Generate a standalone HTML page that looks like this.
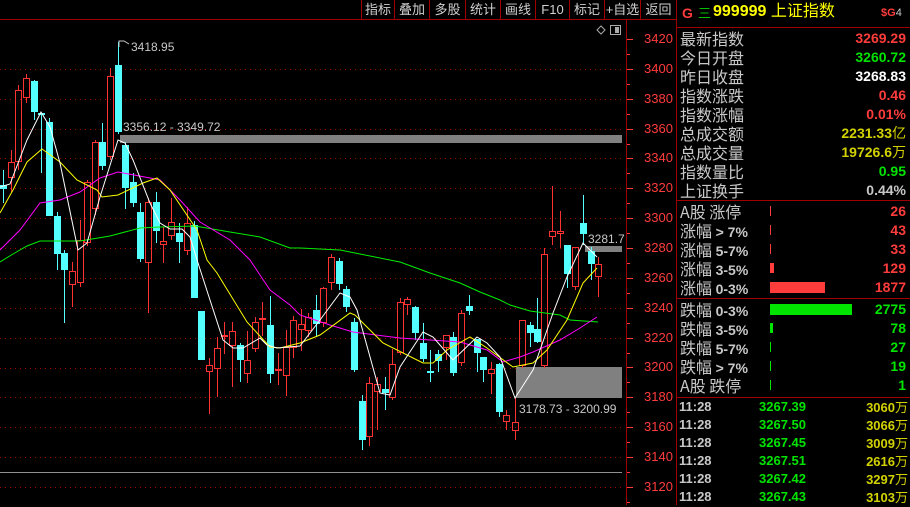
<!DOCTYPE html>
<html><head><meta charset="utf-8">
<style>
*{margin:0;padding:0;box-sizing:border-box}
body{width:910px;height:505px;background:#000;position:relative;overflow:hidden;font-family:"Liberation Sans","Noto Sans CJK SC",sans-serif}
.t{position:absolute;white-space:nowrap;line-height:1}
.tb{position:absolute;top:0;height:19px;color:#d0d0d0;font-size:13px;text-align:center;line-height:19px;border-left:1px solid #a00000}
.lab{position:absolute;left:680px;color:#c8c8c8;font-size:16px;line-height:19px;font-family:"Noto Sans CJK SC",sans-serif}
.val{position:absolute;right:4px;font-size:14px;font-weight:bold;line-height:19px;font-family:"Liberation Sans",sans-serif}
.r{color:#ff3c3c}.g{color:#00e400}.w{color:#fff}.y{color:#d2d200}.gr{color:#c8c8c8}
.ax{position:absolute;left:644px;color:#ff3c3c;font-size:13px;line-height:14px}
</style></head><body>
<div style="position:absolute;left:0;top:19px;width:677px;height:1px;background:#a00000"></div>
<div class="tb" style="left:361px;width:33px">指标</div>
<div class="tb" style="left:394px;width:35px">叠加</div>
<div class="tb" style="left:429px;width:36px">多股</div>
<div class="tb" style="left:465px;width:35px">统计</div>
<div class="tb" style="left:500px;width:35px">画线</div>
<div class="tb" style="left:535px;width:34px">F10</div>
<div class="tb" style="left:569px;width:35px">标记</div>
<div class="tb" style="left:604px;width:36px">+自选</div>
<div class="tb" style="left:640px;width:36px">返回</div>
<div style="position:absolute;left:626px;top:19px;width:1px;height:486px;background:#a00000"></div>
<div style="position:absolute;left:676px;top:0;width:1px;height:505px;background:#a00000"></div>
<div style="position:absolute;left:677px;top:27px;width:233px;height:1px;background:#a00000"></div>
<div style="position:absolute;left:677px;top:200px;width:233px;height:1px;background:#a00000"></div>
<div style="position:absolute;left:677px;top:298px;width:233px;height:1px;background:#a00000"></div>
<div style="position:absolute;left:677px;top:397px;width:233px;height:1px;background:#a00000"></div>

<svg width="910" height="505" style="position:absolute;left:0;top:0" id="sv">
<g stroke="#a00000" stroke-width="1" stroke-dasharray="1,4" id="grid"></g>
<g id="ticks" stroke="#ff3c3c"></g>
<line x1="0" y1="472.5" x2="622" y2="472.5" stroke="#909090"/>
<rect x="120" y="135" width="502" height="8" fill="#808080"/>
<rect x="516" y="367" width="106" height="31" fill="#808080"/>
<rect x="585" y="246" width="37" height="6" fill="#808080"/>
<g id="cd"></g>
<polyline fill="none" stroke="#00ee00" stroke-width="1" points="0,262 13,254 27,246 40,241 80,241 110,236 140,228 160,227 195,226 230,232 260,237 290,248 300,248 340,250 360,254 400,262 430,273 460,283 480,292 500,300 510,305 530,311 560,315 570,320 598,322"/>
<polyline fill="none" stroke="#ff00ff" stroke-width="1" points="0,250 20,230 40,203 60,200 80,192 100,178 118,172 150,178 160,180 180,200 200,222 230,240 250,260 270,290 290,305 300,315 330,325 353,332 400,338 460,342 487,350 503,362 520,357 533,352 560,340 580,328 597,317"/>
<polyline fill="none" stroke="#ffff00" stroke-width="1" points="0,213 13,190 27,162 42,149 60,162 77,180 97,190 102,197 118,195 143,183 157,178 170,190 197,230 207,260 217,273 247,322 270,347 280,348 300,343 320,335 350,313 355,315 383,343 423,363 433,363 447,350 470,337 487,348 513,367 533,363 547,350 567,320 583,283 597,268"/>
<polyline fill="none" stroke="#ffffff" stroke-width="1" points="0,187 10,184 27,140 41,112 50,127 60,163 78,250 87,243 100,197 118,140 125,143 133,160 150,203 160,223 170,229 182,229 190,237 198,263 210,300 223,340 233,348 243,348 260,338 267,345 277,348 300,346 320,320 340,293 350,297 357,310 380,393 390,395 400,367 423,332 433,337 453,360 477,337 487,343 500,357 515,398 533,370 553,313 567,277 583,243 597,257"/>
<path d="M119 47 V41 H124 L129 44" fill="none" stroke="#c8c8c8"/>
<text x="131" y="51" fill="#c8c8c8" font-size="12" font-family="Liberation Sans">3418.95</text>
<text x="123" y="131" fill="#c8c8c8" font-size="12" font-family="Liberation Sans">3356.12 - 3349.72</text>
<text x="588" y="243" fill="#c8c8c8" font-size="12" font-family="Liberation Sans">3281.7</text>
<text x="519" y="413" fill="#c8c8c8" font-size="12" font-family="Liberation Sans">3178.73 - 3200.99</text>
<path d="M597 30 L601 26 L605 30 L601 34 Z" fill="none" stroke="#aaa"/>
<rect x="610.5" y="25.5" width="10" height="9" fill="none" stroke="#aaa"/>
<rect x="615" y="27" width="4" height="6" fill="#aaa"/>
<rect x="770" y="206" width="1" height="10" fill="#ff3c3c"/>
<rect x="770" y="225" width="1" height="10" fill="#ff3c3c"/>
<rect x="770" y="244" width="1" height="10" fill="#ff3c3c"/>
<rect x="770" y="263" width="4" height="10" fill="#ff3c3c"/>
<rect x="770" y="282" width="55" height="11" fill="#ff3c3c"/>
<rect x="770" y="304" width="82" height="11" fill="#00e400"/>
<rect x="770" y="323" width="3" height="10" fill="#00e400"/>
<rect x="770" y="342" width="1" height="10" fill="#00e400"/>
<rect x="770" y="361" width="1" height="10" fill="#00e400"/>
<rect x="770" y="380" width="1" height="10" fill="#00e400"/>
</svg>

<div class="ax" style="top:32px">3420</div><div class="ax" style="top:62px">3400</div>
<div class="ax" style="top:92px">3380</div><div class="ax" style="top:122px">3360</div>
<div class="ax" style="top:151px">3340</div><div class="ax" style="top:181px">3320</div>
<div class="ax" style="top:211px">3300</div><div class="ax" style="top:241px">3280</div>
<div class="ax" style="top:271px">3260</div><div class="ax" style="top:301px">3240</div>
<div class="ax" style="top:331px">3220</div><div class="ax" style="top:360px">3200</div>
<div class="ax" style="top:390px">3180</div><div class="ax" style="top:420px">3160</div>
<div class="ax" style="top:450px">3140</div><div class="ax" style="top:480px">3120</div>

<div class="t" style="left:682px;top:6px;color:#ff3c3c;font-size:14px;font-weight:bold">G</div>
<div class="t" style="left:698px;top:6px;color:#00c000;font-size:13px;font-family:'Noto Sans CJK SC',sans-serif">三</div>
<div class="t" style="left:713px;top:4px;color:#ffff00;font-size:16px;font-family:'Liberation Sans','Noto Sans CJK SC',sans-serif"><b>999999</b> 上证指数</div>
<div class="t" style="left:881px;top:8px;color:#ff3c3c;font-size:11px;font-weight:bold">$G<span style="color:#c8c8c8;font-weight:normal">4</span></div>

<div class="lab" style="top:29px">最新指数</div><div class="val r" style="top:29px">3269.29</div>
<div class="lab" style="top:48px">今日开盘</div><div class="val g" style="top:48px">3260.72</div>
<div class="lab" style="top:67px">昨日收盘</div><div class="val w" style="top:67px">3268.83</div>
<div class="lab" style="top:86px">指数涨跌</div><div class="val r" style="top:86px">0.46</div>
<div class="lab" style="top:105px">指数涨幅</div><div class="val r" style="top:105px">0.01%</div>
<div class="lab" style="top:124px">总成交额</div><div class="val y" style="top:124px">2231.33<span style="font-weight:normal;font-family:'Noto Sans CJK SC'">亿</span></div>
<div class="lab" style="top:143px">总成交量</div><div class="val y" style="top:143px">19726.6<span style="font-weight:normal;font-family:'Noto Sans CJK SC'">万</span></div>
<div class="lab" style="top:162px">指数量比</div><div class="val g" style="top:162px">0.95</div>
<div class="lab" style="top:181px">上证换手</div><div class="val gr" style="top:181px">0.44%</div>

<div class="lab" style="top:202px">A股 涨停</div><div class="val r" style="top:202px">26</div>
<div class="lab" style="top:221px">涨幅 <b style="font-family:'Liberation Sans';font-size:14px">&gt; 7%</b></div><div class="val r" style="top:221px">43</div>
<div class="lab" style="top:240px">涨幅 <b style="font-family:'Liberation Sans';font-size:14px">5-7%</b></div><div class="val r" style="top:240px">33</div>
<div class="lab" style="top:259px">涨幅 <b style="font-family:'Liberation Sans';font-size:14px">3-5%</b></div><div class="val r" style="top:259px">129</div>
<div class="lab" style="top:278px">涨幅 <b style="font-family:'Liberation Sans';font-size:14px">0-3%</b></div><div class="val r" style="top:278px">1877</div>
<div class="lab" style="top:300px">跌幅 <b style="font-family:'Liberation Sans';font-size:14px">0-3%</b></div><div class="val g" style="top:300px">2775</div>
<div class="lab" style="top:319px">跌幅 <b style="font-family:'Liberation Sans';font-size:14px">3-5%</b></div><div class="val g" style="top:319px">78</div>
<div class="lab" style="top:338px">跌幅 <b style="font-family:'Liberation Sans';font-size:14px">5-7%</b></div><div class="val g" style="top:338px">27</div>
<div class="lab" style="top:357px">跌幅 <b style="font-family:'Liberation Sans';font-size:14px">&gt; 7%</b></div><div class="val g" style="top:357px">19</div>
<div class="lab" style="top:376px">A股 跌停</div><div class="val g" style="top:376px">1</div>

<div id="ticks2"></div>
<div style="position:absolute;left:679px;top:398px;width:229px;font-size:13px;font-weight:bold;line-height:18px">
<div style="position:relative;height:18px"><span class="gr">11:28</span><span class="g" style="position:absolute;left:80px">3267.39</span><span class="y" style="position:absolute;right:0">3060<span style="font-weight:normal;font-family:'Noto Sans CJK SC'">万</span></span></div>
<div style="position:relative;height:18px"><span class="gr">11:28</span><span class="g" style="position:absolute;left:80px">3267.50</span><span class="y" style="position:absolute;right:0">3066<span style="font-weight:normal;font-family:'Noto Sans CJK SC'">万</span></span></div>
<div style="position:relative;height:18px"><span class="gr">11:28</span><span class="g" style="position:absolute;left:80px">3267.45</span><span class="y" style="position:absolute;right:0">3009<span style="font-weight:normal;font-family:'Noto Sans CJK SC'">万</span></span></div>
<div style="position:relative;height:18px"><span class="gr">11:28</span><span class="g" style="position:absolute;left:80px">3267.51</span><span class="y" style="position:absolute;right:0">2616<span style="font-weight:normal;font-family:'Noto Sans CJK SC'">万</span></span></div>
<div style="position:relative;height:18px"><span class="gr">11:28</span><span class="g" style="position:absolute;left:80px">3267.42</span><span class="y" style="position:absolute;right:0">3297<span style="font-weight:normal;font-family:'Noto Sans CJK SC'">万</span></span></div>
<div style="position:relative;height:18px"><span class="gr">11:28</span><span class="g" style="position:absolute;left:80px">3267.43</span><span class="y" style="position:absolute;right:0">3103<span style="font-weight:normal;font-family:'Noto Sans CJK SC'">万</span></span></div>
</div>

<script>
var NS="http://www.w3.org/2000/svg";
function el(p,n,a){var e=document.createElementNS(NS,n);for(var k in a)e.setAttribute(k,a[k]);p.appendChild(e);return e;}
var g=document.getElementById("grid");
for(var i=1;i<=15;i++){var y=Math.round(39+i*29.87)+0.5;if(y>470&&y<480)continue;el(g,"line",{x1:0,y1:y,x2:622,y2:y});}
var t=document.getElementById("ticks");
for(var i=0;i<=31;i++){var y=Math.round(39+i*14.93)+0.5;el(t,"line",{x1:627,y1:y,x2:i%2?630:633,y2:y});}
var C=[
[3,185,189,170,203,'c'],[11,162,178,150,192,'r'],[18,90,162,85,170,'r'],[26,78,98,74,103,'r'],[34,81,112,80,120,'c'],
[41,113,115,113,173,'c'],[49,122,216,118,216,'c'],[57,216,254,212,270,'c'],[64,253,270,250,323,'c'],[72,271,285,262,307,'r'],
[80,240,283,220,287,'r'],[87,182,243,180,246,'r'],[95,142,209,140,215,'r'],[102,142,166,123,170,'c'],[110,76,157,68,160,'r'],
[118,65,132,42,134,'c'],[125,145,188,142,209,'c'],[133,182,203,173,207,'c'],[140,212,259,203,262,'c'],[148,202,263,198,313,'r'],
[156,202,231,192,243,'c'],[163,241,245,227,263,'r'],[171,222,236,198,240,'r'],[179,233,242,223,263,'c'],[187,223,251,207,255,'r'],
[194,225,298,221,298,'c'],[201,311,360,311,360,'c'],[209,365,372,358,414,'r'],[217,348,369,337,397,'r'],[224,335,337,322,354,'r'],
[232,331,346,322,387,'r'],[240,345,360,343,382,'c'],[247,360,374,331,383,'r'],[255,322,349,317,352,'r'],[262,318,320,302,336,'r'],
[270,325,374,296,383,'c'],[278,369,371,353,385,'r'],[286,347,376,330,396,'r'],[293,320,348,316,358,'r'],[301,324,330,309,351,'r'],
[308,317,331,313,337,'r'],[316,310,324,295,337,'c'],[323,288,323,287,327,'r'],[331,257,283,254,290,'r'],[339,261,284,258,290,'c'],
[346,289,307,286,312,'c'],[354,322,370,318,372,'c'],[362,401,440,395,450,'c'],[369,383,437,377,446,'r'],[377,384,392,377,430,'r'],
[385,389,393,377,410,'c'],[392,364,398,349,400,'r'],[400,302,353,298,355,'r'],[407,299,305,297,315,'r'],[415,307,333,306,340,'c'],
[423,343,359,323,362,'c'],[430,371,373,350,382,'c'],[438,354,361,350,372,'c'],[446,335,348,335,360,'r'],[453,337,373,332,376,'c'],
[461,313,363,310,366,'r'],[469,306,311,295,315,'c'],[477,339,353,339,372,'c'],[483,357,370,357,382,'c'],[491,369,374,362,394,'r'],
[499,364,412,363,417,'c'],[506,415,422,410,430,'r'],[515,422,431,397,440,'r'],[522,320,366,320,368,'r'],[530,325,333,322,347,'c'],
[537,329,342,298,343,'c'],[544,254,366,248,368,'r'],[552,231,237,186,245,'r'],[560,231,234,211,248,'r'],[567,245,274,245,288,'c'],
[575,247,287,247,290,'r'],[583,223,234,195,245,'c'],[591,251,264,247,280,'c'],[598,264,277,257,297,'r']];
var cd=document.getElementById("cd");
C.forEach(function(c){var x=c[0],col=c[5]=='r'?'#ff3232':'#54ffff';
var top=c[1],bot=Math.max(c[2],c[1]+1);
if(c[5]=='r'){el(cd,"line",{x1:x+0.5,y1:c[3],x2:x+0.5,y2:top,stroke:col});el(cd,"line",{x1:x+0.5,y1:bot,x2:x+0.5,y2:c[4],stroke:col});
el(cd,"rect",{x:x-2.5,y:top+0.5,width:6,height:Math.max(bot-top-1,1),fill:"none",stroke:col});}
else{el(cd,"line",{x1:x+0.5,y1:c[3],x2:x+0.5,y2:c[4],stroke:col});el(cd,"rect",{x:x-3,y:top,width:7,height:bot-top,fill:col});}
});
</script>
</body></html>
